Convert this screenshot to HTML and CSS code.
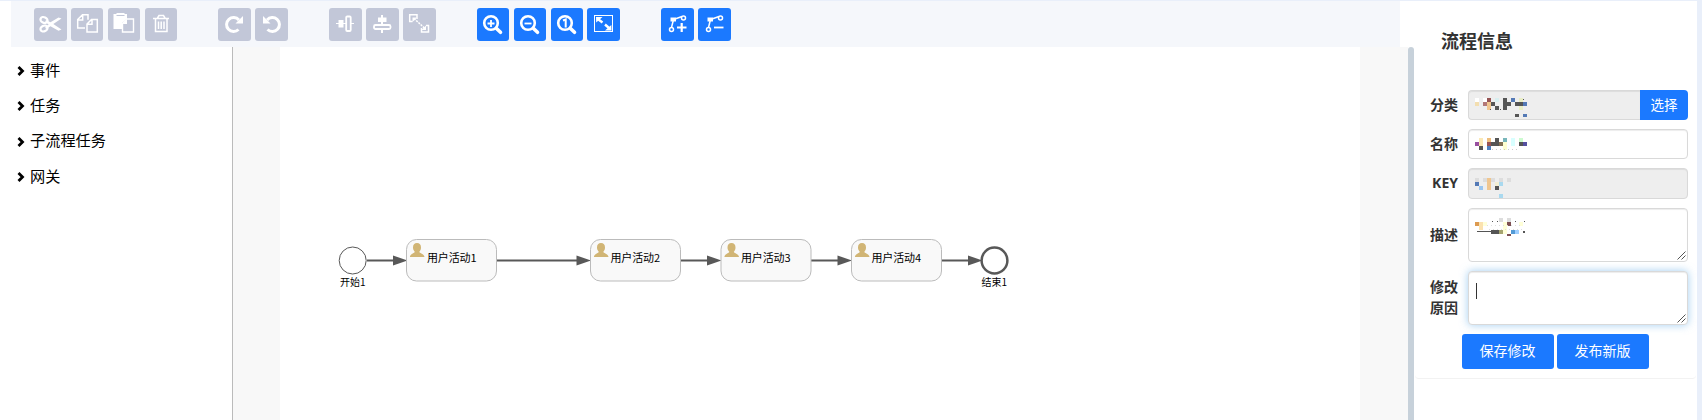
FILE: index.html
```html
<!DOCTYPE html>
<html lang="zh-CN">
<head>
<meta charset="utf-8">
<title>流程信息</title>
<link rel="stylesheet" href="styles.css">
</head>
<body>
<div class="app">
  <main class="editor">
    <div class="toolbar">
      <div class="group">
        <button class="tool off"><svg viewBox="0 0 33 33"><g fill="none" stroke="#fff" stroke-width="2.2"><ellipse cx="10" cy="12" rx="3.7" ry="2.8" transform="rotate(25 10 12)"/><ellipse cx="10" cy="20.5" rx="3.7" ry="2.8" transform="rotate(-25 10 20.5)"/></g><path fill="#fff" d="M12 12l4.500 2.200 8-4.700 3 1-8.200 5.600 8.200 5.400-3 1.200-8-4.500-4.500 2.800-.8-2 3.500-2.600-3.500-2.500z"/></svg></button>
        <button class="tool off"><svg viewBox="0 0 33 33"><g fill="none" stroke="#fff" stroke-width="1.500"><path d="M14 20H6.700v-8.500L11.500 6.700h5.500v5M6.700 12h5V7M16 24v-8l4.500-4.500h5.800V24zM16 16.300h5v-4.800"/></g></svg></button>
        <button class="tool off"><svg viewBox="0 0 33 33"><path fill="#fff" d="M5.500 6h3V5h8v1h2.500v5h-1l-4 4v6h-8.500z"/><path fill="none" stroke="#c2c7d8" d="M8.500 7.500h8"/><path fill="#c2c7d8" stroke="#fff" stroke-width="1.400" d="M14.500 24v-8.500l4-4.500h7v13z"/><path fill="#fff" d="M14.500 16h4.500v-5z"/></svg></button>
        <button class="tool off"><svg viewBox="0 0 33 33"><path fill="none" stroke="#fff" stroke-width="1.500" d="M8 10.500h16M12.500 10l1.500-2.500h4.500l1.500 2.500M10.500 11v12.500h11.500V11M13.500 13.500v7.500M16.200 13.500v7.500M19 13.500v7.500"/></svg></button>
      </div>
      <div class="group">
        <button class="tool off"><svg viewBox="0 0 33 33"><path fill="none" stroke="#fff" stroke-width="3" d="M20.500 21.500a7 7 0 1 1 .4-9.500"/><path fill="#fff" d="M25 8v7.500h-7.500z"/></svg></button>
        <button class="tool off"><svg viewBox="0 0 33 33"><g transform="translate(33 0) scale(-1 1)"><path fill="none" stroke="#fff" stroke-width="3" d="M20.500 21.500a7 7 0 1 1 .4-9.500"/><path fill="#fff" d="M25 8v7.500h-7.500z"/></g></svg></button>
      </div>
      <div class="group">
        <button class="tool off"><svg viewBox="0 0 33 33"><path stroke="#fff" d="M7 15.500h18"/><path fill="#fff" d="M9.500 12h5v7.500h-5z"/><rect x="17.200" y="8.500" width="4.500" height="14.500" rx="1" fill="#c2c7d8" stroke="#fff" stroke-width="1.800"/></svg></button>
        <button class="tool off"><svg viewBox="0 0 33 33"><path stroke="#fff" stroke-width="2" d="M16 7v18"/><path fill="#fff" d="M12 9.500h8.500v4.500H12z"/><rect x="8" y="17" width="16.500" height="4" rx="1.500" fill="#c2c7d8" stroke="#fff" stroke-width="1.800"/></svg></button>
        <button class="tool off"><svg viewBox="0 0 33 33"><g fill="none" stroke="#fff" stroke-width="1.500"><path d="M14 11V6.800H6.700v6.700H9.500M18.500 20v4h7v-6.500H23"/><path stroke-dasharray="2 1" d="M11 10.500l11 10"/></g><path fill="#fff" d="M9.500 9.500h4.500L9.500 14zM23 17.500V22h-4.500z"/></svg></button>
      </div>
      <div class="group">
        <button class="tool"><svg viewBox="0 0 33 33"><circle cx="14" cy="15" r="6.800" fill="none" stroke="#fff" stroke-width="2.600"/><path stroke="#fff" stroke-width="3.600" stroke-linecap="round" d="M19.500 20.500l4 3.800"/><path stroke="#fff" stroke-width="1.800" d="M10.500 15.500h7M14 12v7"/></svg></button>
        <button class="tool"><svg viewBox="0 0 33 33"><circle cx="14" cy="15" r="6.800" fill="none" stroke="#fff" stroke-width="2.600"/><path stroke="#fff" stroke-width="3.600" stroke-linecap="round" d="M19.500 20.500l4 3.800"/><path stroke="#fff" stroke-width="1.800" d="M10.500 15.500h7"/></svg></button>
        <button class="tool"><svg viewBox="0 0 33 33"><circle cx="14" cy="15" r="6.800" fill="none" stroke="#fff" stroke-width="2.600"/><path stroke="#fff" stroke-width="3.600" stroke-linecap="round" d="M19.500 20.500l4 3.800"/><path fill="none" stroke="#fff" stroke-width="2" d="M12 12.500l2.700-1v8"/></svg></button>
        <button class="tool"><svg viewBox="0 0 33 33"><rect x="7.500" y="7.500" width="18" height="16" fill="none" stroke="#fff"/><path stroke="#fff" stroke-width="2.400" d="M11.500 11.500l4 3M18 16.500l4 3.500"/><path fill="#fff" d="M9 9h6.500L9.200 14.500zM24.500 22.500H18l6.300-5.500z"/></svg></button>
      </div>
      <div class="group">
        <button class="tool"><svg viewBox="0 0 33 33"><g fill="none" stroke="#fff" stroke-width="1.500"><circle cx="10.500" cy="21.500" r="2"/><circle cx="22.500" cy="10" r="2"/><path d="M10.500 19.500l2-8M14 11l7-2.500"/></g><path fill="#fff" d="M9.500 9.500h5.500v4H9.500z"/><path stroke="#fff" stroke-width="2.200" d="M16 19.500h9.500M20.700 15v9"/></svg></button>
        <button class="tool"><svg viewBox="0 0 33 33"><g fill="none" stroke="#fff" stroke-width="1.500"><circle cx="10.500" cy="21.500" r="2"/><circle cx="22.500" cy="10" r="2"/><path d="M10.500 19.500l2-8M14 11l7-2.500"/></g><path fill="#fff" d="M9.500 9.500h5.500v4H9.500z"/><path stroke="#fff" stroke-width="1.800" d="M16 19.500h9.500"/></svg></button>
      </div>
    </div>
    <div class="workspace">
      <nav class="palette">
        <a class="item"><svg class="chev" viewBox="0 0 8 10"><path d="M1.500 1L5.500 5l-4 4"/></svg>事件</a>
        <a class="item"><svg class="chev" viewBox="0 0 8 10"><path d="M1.500 1L5.500 5l-4 4"/></svg>任务</a>
        <a class="item"><svg class="chev" viewBox="0 0 8 10"><path d="M1.500 1L5.500 5l-4 4"/></svg>子流程任务</a>
        <a class="item"><svg class="chev" viewBox="0 0 8 10"><path d="M1.500 1L5.500 5l-4 4"/></svg>网关</a>
      </nav>
      <div class="stage">
        <svg class="diagram" viewBox="280 47 1080 373">
          <defs>
            <g id="task"><rect x=".5" y=".5" width="90" height="41.500" rx="10" fill="#f9f9f9" stroke="#bbb"/><path fill="#d1b575" d="M11 4c2.600 0 4 1.700 4 4.500 0 2-.8 3.400-1.700 4.200.2 1.700 4.700 1.600 5.200 5.300H3.900c.4-3.700 4.600-3.600 4.900-5.300C7.900 11.900 7 10.500 7 8.500 7 5.700 8.400 4 11 4z"/></g>
            <path id="head" d="M0 0l-14.500-5v10z"/>
          </defs>
          <g stroke="#585858" stroke-width="2"><path d="M367 260.500h28M497 260.500h82M681 260.500h28M811 260.500h30M942 260.500h28"/></g>
          <g fill="#585858"><use href="#head" x="407.500" y="260.500"/><use href="#head" x="591" y="260.500"/><use href="#head" x="721.500" y="260.500"/><use href="#head" x="852" y="260.500"/><use href="#head" x="982.500" y="260.500"/></g>
          <circle cx="352.700" cy="260.500" r="13.500" fill="#fff" stroke="#585858"/>
          <circle cx="994.500" cy="260.500" r="12.900" fill="#fff" stroke="#585858" stroke-width="2.500"/>
          <use href="#task" x="406" y="239"/><use href="#task" x="590" y="239"/><use href="#task" x="720.500" y="239"/><use href="#task" x="851" y="239"/>
          <g class="task-name"><text x="427" y="262" textLength="49.500">用户活动1</text><text x="610.500" y="262" textLength="49.500">用户活动2</text><text x="741" y="262" textLength="49.500">用户活动3</text><text x="871.500" y="262" textLength="49.500">用户活动4</text></g>
          <g class="event-name"><text x="340" y="286" textLength="25.500">开始1</text><text x="981.500" y="286" textLength="25.500">结束1</text></g>
        </svg>
      </div>
    </div>
  </main>
  <div class="splitter"></div>
  <aside class="panel">
    <h1 class="title">流程信息</h1>
    <form class="form">
      <div class="row"><label class="label">分类</label>
        <div class="field locked joined"><svg class="mosaic" viewBox="0 0 56 24" shape-rendering="crispEdges"><path fill="#fff" d="M0 2h4v4H0zM8 2h4v4H8z"/><path fill="#f3deb0" d="M0 6h4v4H0z"/><path fill="#955454" d="M12 2h4v4h-4z"/><path fill="#b27777" d="M8 6h4v4H8z"/><path fill="#f0c68f" d="M12 6h4v8h-4z"/><path fill="#d8eff0" d="M20 2h4v4h-4z"/><path fill="#555" d="M16 6h4v4h-4zM20 10h4v4h-4zM28 2h4v12h-4zM32 6h4v4h-4zM40 6h8v4h-8zM40 18h4v3h-4zM46 3h3v1h-3zM15 13h1v1h-1zM25 13h1v1h-1z"/><path fill="#5379b5" d="M36 2h4v4h-4zM48 6h4v4h-4zM48 18h4v3h-4z"/><path fill="#e9eec5" d="M44 2h4v4h-4zM44 10h4v4h-4z"/></svg></div><button type="button" class="pick">选择</button></div>
      <div class="row"><label class="label">名称</label>
        <div class="field"><svg class="mosaic" viewBox="0 0 56 24" shape-rendering="crispEdges"><path fill="#9950a0" d="M0 7h4v4H0z"/><path fill="#fbe8b5" d="M4 3h4v8H4z"/><path fill="#555" d="M4 11h4v4H4zM16 7h4v4h-4zM20 3h4v8h-4zM44 7h4v4h-4z"/><path fill="#edbd7d" d="M12 3h4v4h-4z"/><path fill="#985353" d="M12 7h4v4h-4z"/><path fill="#4e7fbe" d="M12 11h4v4h-4z"/><path fill="#827052" d="M24 7h4v4h-4z"/><path fill="#78b6ba" d="M28 3h4v4h-4z"/><path fill="#ffffcf" d="M28 7h4v8h-4z"/><path fill="#d8ffff" d="M36 3h4v8h-4z"/><path fill="#ccfbd0" d="M44 3h4v4h-4z"/><path fill="#5550a0" d="M48 7h4v4h-4z"/><path stroke="#ccc" stroke-dasharray="1 3" d="M17 14.500h27"/></svg></div></div>
      <div class="row key"><label class="label">KEY</label>
        <div class="field locked"><svg class="mosaic" viewBox="0 0 56 24" shape-rendering="crispEdges"><path fill="#ddd" d="M0 4h4v4H0zM8 4h12v4H8zM24 4h4v4h-4zM32 4h4v4h-4z"/><path fill="#5379b5" d="M0 8h4v4H0z"/><path fill="#9bc6f0" d="M4 12h4v4H4z"/><path fill="#f0c68f" d="M12 4h4v12h-4z"/><path fill="#f3eed3" d="M20 8h4v4h-4z"/><path fill="#555" d="M20 12h4v4h-4z"/><path fill="#a9d9ef" d="M24 8h4v4h-4zM24 20h4v4h-4z"/></svg></div></div>
      <div class="row tall"><label class="label">描述</label>
        <div class="field"><svg class="mosaic" viewBox="0 0 56 24" shape-rendering="crispEdges"><path fill="#ddd" d="M24 4h4v4h-4zM32 4h4v4h-4z"/><path fill="#dc9a51" d="M0 8h4v4H0z"/><path fill="#fbe2ae" d="M4 8h4v8H4z"/><path fill="#ffffd8" d="M8 8h4v4H8zM28 8h4v12h-4zM44 8h4v4h-4z"/><path fill="#555" d="M2 17h14v1H2zM16 16h8v4h-8zM49 7h1v1h-1zM48 17h2v2h-2zM17 7h1v1h-1zM22 7h1v1h-1zM40 7h1v1h-1z"/><path fill="#7d5053" d="M32 8h4v4h-4zM32 20h4v2h-4z"/><path fill="#a5a470" d="M24 16h4v4h-4z"/><path fill="#549bd6" d="M36 16h4v4h-4z"/><path fill="#9fcfff" d="M40 16h4v4h-4z"/><path fill="none" stroke="#ddd" stroke-dasharray="1 3" d="M12 11.500h36M14 15.500h34"/></svg><svg class="grip" viewBox="0 0 9 9"><path d="M.5 8.500l8-8M4.500 8.500l4-4"/></svg></div></div>
      <div class="row tall"><label class="label">修改<br>原因</label>
        <div class="field focus"><span class="caret"></span><svg class="grip" viewBox="0 0 9 9"><path d="M.5 8.500l8-8M4.500 8.500l4-4"/></svg></div></div>
      <div class="actions"><button type="button" class="primary">保存修改</button><button type="button" class="primary">发布新版</button></div>
    </form>
  </aside>
</div>
</body>
</html>
```
FILE: styles.css
```css
* { box-sizing: border-box; }
body { margin: 0; overflow: hidden; background: #fff; font-family: "Noto Sans", "Noto Sans CJK SC", sans-serif; color: #333; }
button { border: 0; padding: 0; font-family: inherit; color: #fff; background: #1b79ff; }
.app { display: flex; width: 1702px; height: 420px; border-top: 1px solid #e9effa; border-right: 5px solid #e9effa; }
.editor { width: 1408px; display: flex; flex-direction: column; }
.toolbar { height: 46px; width: 1389px; margin-left: 11px; padding: 7px 0 0 23px; display: flex; gap: 41.300px; background: #f5f7fb; }
.group { display: flex; gap: 4.280px; }
.tool { width: 32.600px; height: 33px; border-radius: 3px; }
.tool.off { background: #c2c7d8; }
.tool svg { display: block; width: 33px; height: 33px; }
.workspace { flex: 1; display: flex; }
.palette { width: 233px; border-right: 1px solid #bbb; padding: 6px 0 0 17px; font-size: 15.200px; color: #000; font-family: "Noto Sans CJK SC", sans-serif; }
.item { display: flex; align-items: center; height: 35.300px; line-height: 31px; padding-bottom: 3px; }
.chev { width: 8px; height: 10px; margin: 4px 5px 0 0; fill: none; stroke: #000; stroke-width: 2.800; }
.stage { flex: 1; padding-left: 47px; background: #f8f8f8; }
.diagram { display: block; width: 1080px; height: 373px; background: #fff; }
.diagram text { fill: #000; font-family: "Noto Sans CJK SC", sans-serif; }
.task-name { font-size: 11px; }
.event-name { font-size: 10px; }
.splitter { width: 6px; margin-top: 46px; border-radius: 3px 3px 0 0; background: #c7d1da; }
.panel { width: 283px; }
.title { margin: 0; padding: 26px 0 0 27px; height: 89px; font-size: 18px; line-height: 28px; font-weight: 700; }
.form { margin: 0 1px; padding: 0 8px 9px 0; height: 289px; border-bottom: 1px solid #f2f2f2; border-radius: 4px; display: flex; flex-direction: column; gap: 9px; }
.row { display: flex; align-items: stretch; height: 30px; }
.row.key { height: 31px; }
.row.tall { height: 54px; }
.label { width: 43px; margin-right: 10px; padding-bottom: 2px; display: flex; align-items: center; justify-content: flex-end; font-size: 14px; line-height: 21px; font-weight: 700; }
.field { position: relative; flex: 1; border: 1px solid #d9d9d9; border-radius: 4px; padding: 5px 6px; box-shadow: inset 0 1px 1px rgba(0,0,0,.075); background: #fff; }
.locked { background: #eee; }
.joined { border-radius: 4px 0 0 4px; border-right: 0; }
.focus { box-shadow: inset 0 1px 1px rgba(0,0,0,.075), 0 0 8px rgba(102,175,233,.6); }
.mosaic { display: block; width: 56px; height: 24px; }
.pick { width: 48px; padding-bottom: 3px; border-radius: 0 4px 4px 0; font-size: 13.500px; }
.caret { display: block; width: 1px; height: 16px; margin: 6px 0 0 1px; background: #333; }
.grip { position: absolute; right: 1px; bottom: 1px; width: 9px; height: 9px; fill: none; stroke: #555; }
.actions { display: flex; gap: 3px; padding-left: 47px; }
.primary { width: 92px; height: 35px; padding: 0 1px 3px 0; border-radius: 3px; font-size: 14px; }
```
